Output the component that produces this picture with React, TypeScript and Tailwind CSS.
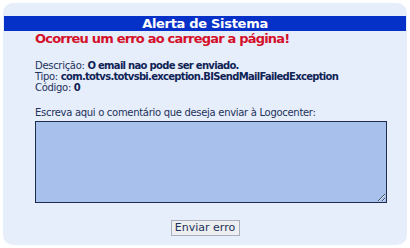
export default function App() {
  return (
    <div className="h-[248px] w-[410px] bg-white p-[3px]" style={{ fontFamily: '"DejaVu Sans", Verdana, sans-serif' }}>
      <div className="flex h-[242px] flex-col rounded-[10px] bg-[#e6edfb] pt-[13px]">
        <div className="mx-px h-[15px] bg-[#0631c8] text-center text-[13px] font-bold leading-[15px] tracking-[-0.3px] text-white">
          Alerta de Sistema
        </div>
        <div className="px-[32px]">
          <h2 className="text-[13px] font-bold leading-[16px] tracking-[-0.8px] text-[#d4102a]">
            Ocorreu um erro ao carregar a página!
          </h2>
          <div className="mt-[13px] whitespace-nowrap text-[10px] leading-[11px] tracking-[-0.3px] text-[#22325a]">
            <p>
              Descrição: <b className="tracking-[-0.7px] text-[#0f2355]">O email nao pode ser enviado.</b>
            </p>
            <p>
              Tipo: <b className="tracking-[-0.7px] text-[#0f2355]">com.totvs.totvsbi.exception.BISendMailFailedException</b>
            </p>
            <p>
              Código: <b className="tracking-[-0.7px] text-[#0f2355]">0</b>
            </p>
          </div>
          <label className="mt-[14px] block text-[10px] leading-[12px] tracking-[-0.3px] text-[#22325a]">
            Escreva aqui o comentário que deseja enviar à Logocenter:
          </label>
          <textarea className="mt-[2px] block h-[82px] w-[352px] resize border border-[#1c2d50] bg-[#a7c0ec]" />
          <div className="mt-[17px] flex justify-center">
            <button className="h-[16px] w-[69px] border border-[#a9b0bb] bg-[#eceef1] text-[11px] leading-[14px] text-[#22325a]">
              Enviar erro
            </button>
          </div>
        </div>
      </div>
    </div>
  )
}
